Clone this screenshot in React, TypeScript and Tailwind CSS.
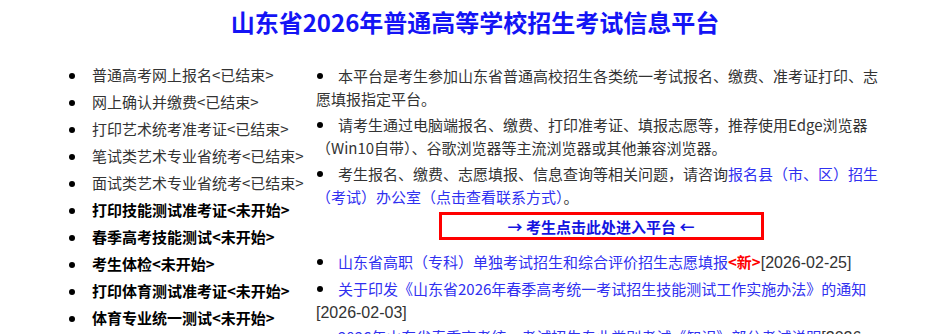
const doneItems = [
  '普通高考网上报名<已结束>',
  '网上确认并缴费<已结束>',
  '打印艺术统考准考证<已结束>',
  '笔试类艺术专业省统考<已结束>',
  '面试类艺术专业省统考<已结束>',
];

const pendingItems = [
  '打印技能测试准考证<未开始>',
  '春季高考技能测试<未开始>',
  '考生体检<未开始>',
  '打印体育测试准考证<未开始>',
  '体育专业统一测试<未开始>',
];

// bullet that does not grow the line box
function Dot() {
  return (
    <span className="relative inline-block w-[22px]">
      <span className="absolute left-[1px] top-[-9px] h-[6px] w-[6px] rounded-full bg-black" />
    </span>
  );
}

const dateFont = { fontFamily: '"Liberation Sans", sans-serif' };

export default function App() {
  return (
    <div
      className="w-[950px] bg-white text-[15px] text-[#333]"
      style={{ fontFamily: '"Noto Sans CJK SC", "Noto Sans", sans-serif' }}
    >
      <h1 className="pt-[5px] text-center text-[24px] font-bold leading-[34px] text-[#1414f5]">
        山东省2026年普通高等学校招生考试信息平台
      </h1>

      <div className="flex pt-[23px]">
        {/* Left: progress list */}
        <ul className="w-[300px] shrink-0 list-none whitespace-nowrap pl-[69px]">
          {doneItems.map((t) => (
            <li key={t} className="flex h-[27px] items-center">
              <span className="mr-[17px] inline-block h-[6px] w-[6px] shrink-0 rounded-full bg-black" />
              {t}
            </li>
          ))}
          {pendingItems.map((t) => (
            <li key={t} className="flex h-[27px] items-center font-bold text-black">
              <span className="mr-[17px] inline-block h-[6px] w-[6px] shrink-0 rounded-full bg-black" />
              {t}
            </li>
          ))}
        </ul>

        {/* Right: notices */}
        <div className="ml-[16px] w-[570px] shrink-0 pt-[2px] leading-[23px]">
          <p>
            <Dot />
            本平台是考生参加山东省普通高校招生各类统一考试报名、缴费、准考证打印、志愿填报指定平台。
          </p>
          <p className="mt-[3px]">
            <Dot />
            请考生通过电脑端报名、缴费、打印准考证、填报志愿等，推荐使用Edge浏览器（Win10自带）、谷歌浏览器等主流浏览器或其他兼容浏览器。
          </p>
          <p className="mt-[3px]">
            <Dot />
            考生报名、缴费、志愿填报、信息查询等相关问题，请咨询
            <a className="text-[#3030f0]">报名县（市、区）招生（考试）办公室（点击查看联系方式）</a>。
          </p>

          <div className="mt-[4px] flex justify-center">
            <a className="flex h-[28px] w-[325px] items-center justify-center border-[3px] border-[#ff0000] text-[15px] font-bold text-[#1414e0]">
              → 考生点击此处进入平台 ←
            </a>
          </div>

          <p className="mt-[10px]">
            <Dot />
            <a className="text-[#3030f0]">山东省高职（专科）单独考试招生和综合评价招生志愿填报</a>
            <span className="font-bold text-[#ff0000]">&lt;新&gt;</span>
            <span style={dateFont} className="text-[16px]">
              [2026-02-25]
            </span>
          </p>
          <p className="mt-[3px]">
            <Dot />
            <a className="text-[#3030f0]">关于印发《山东省2026年春季高考统一考试招生技能测试工作实施办法》的通知</a>
            <span style={dateFont} className="text-[16px]">
              [2026-02-03]
            </span>
          </p>
          <p className="mt-[1px]">
            <Dot />
            <a className="text-[#3030f0]">2026年山东省春季高考统一考试招生专业类别考试《知识》部分考试说明</a>
            <span style={dateFont} className="text-[16px]">
              [2026-01-30]
            </span>
          </p>
        </div>
      </div>
    </div>
  );
}
